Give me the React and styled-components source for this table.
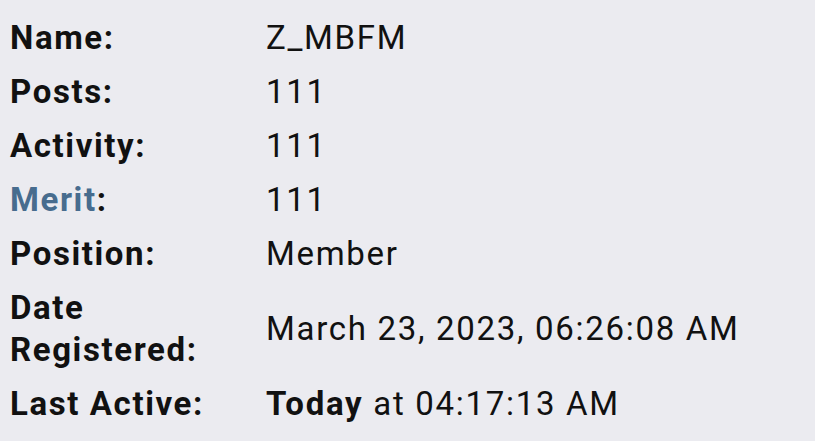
import React from "react";
import styled, { createGlobalStyle } from "styled-components";

const GlobalStyle = createGlobalStyle`
  html, body {
    margin: 0;
    padding: 0;
    background: #ebebf0;
  }
  body {
    font-family: Roboto, "Liberation Sans", sans-serif;
    color: #111;
  }
`;

const Table = styled.div`
  display: grid;
  grid-template-columns: 256px auto;
  padding: 11px 10px;
`;

const Label = styled.div`
  font-size: 33px;
  font-weight: 700;
  letter-spacing: 1.6px;
  line-height: 42px;
  padding: 6px 0;
  display: flex;
  align-items: center;
  max-width: 240px;
`;

const Value = styled.div`
  font-size: 33px;
  letter-spacing: 1.7px;
  line-height: 42px;
  padding: 6px 0;
  display: flex;
  align-items: center;
  white-space: nowrap;
`;

const Link = styled.span`
  color: #476c8e;
`;

const rows = [
  ["Name:", "Z_MBFM"],
  ["Posts:", "111"],
  ["Activity:", "111"],
  [<><Link>Merit</Link>:</>, "111"],
  ["Position:", "Member"],
  ["Date Registered:", "March 23, 2023, 06:26:08 AM"],
  ["Last Active:", <><b>Today</b>&nbsp;at 04:17:13 AM</>],
];

export default function App() {
  return (
    <>
      <GlobalStyle />
      <Table>
        {rows.map(([label, value], i) => (
          <React.Fragment key={i}>
            <Label>{label}</Label>
            <Value>{value}</Value>
          </React.Fragment>
        ))}
      </Table>
    </>
  );
}
